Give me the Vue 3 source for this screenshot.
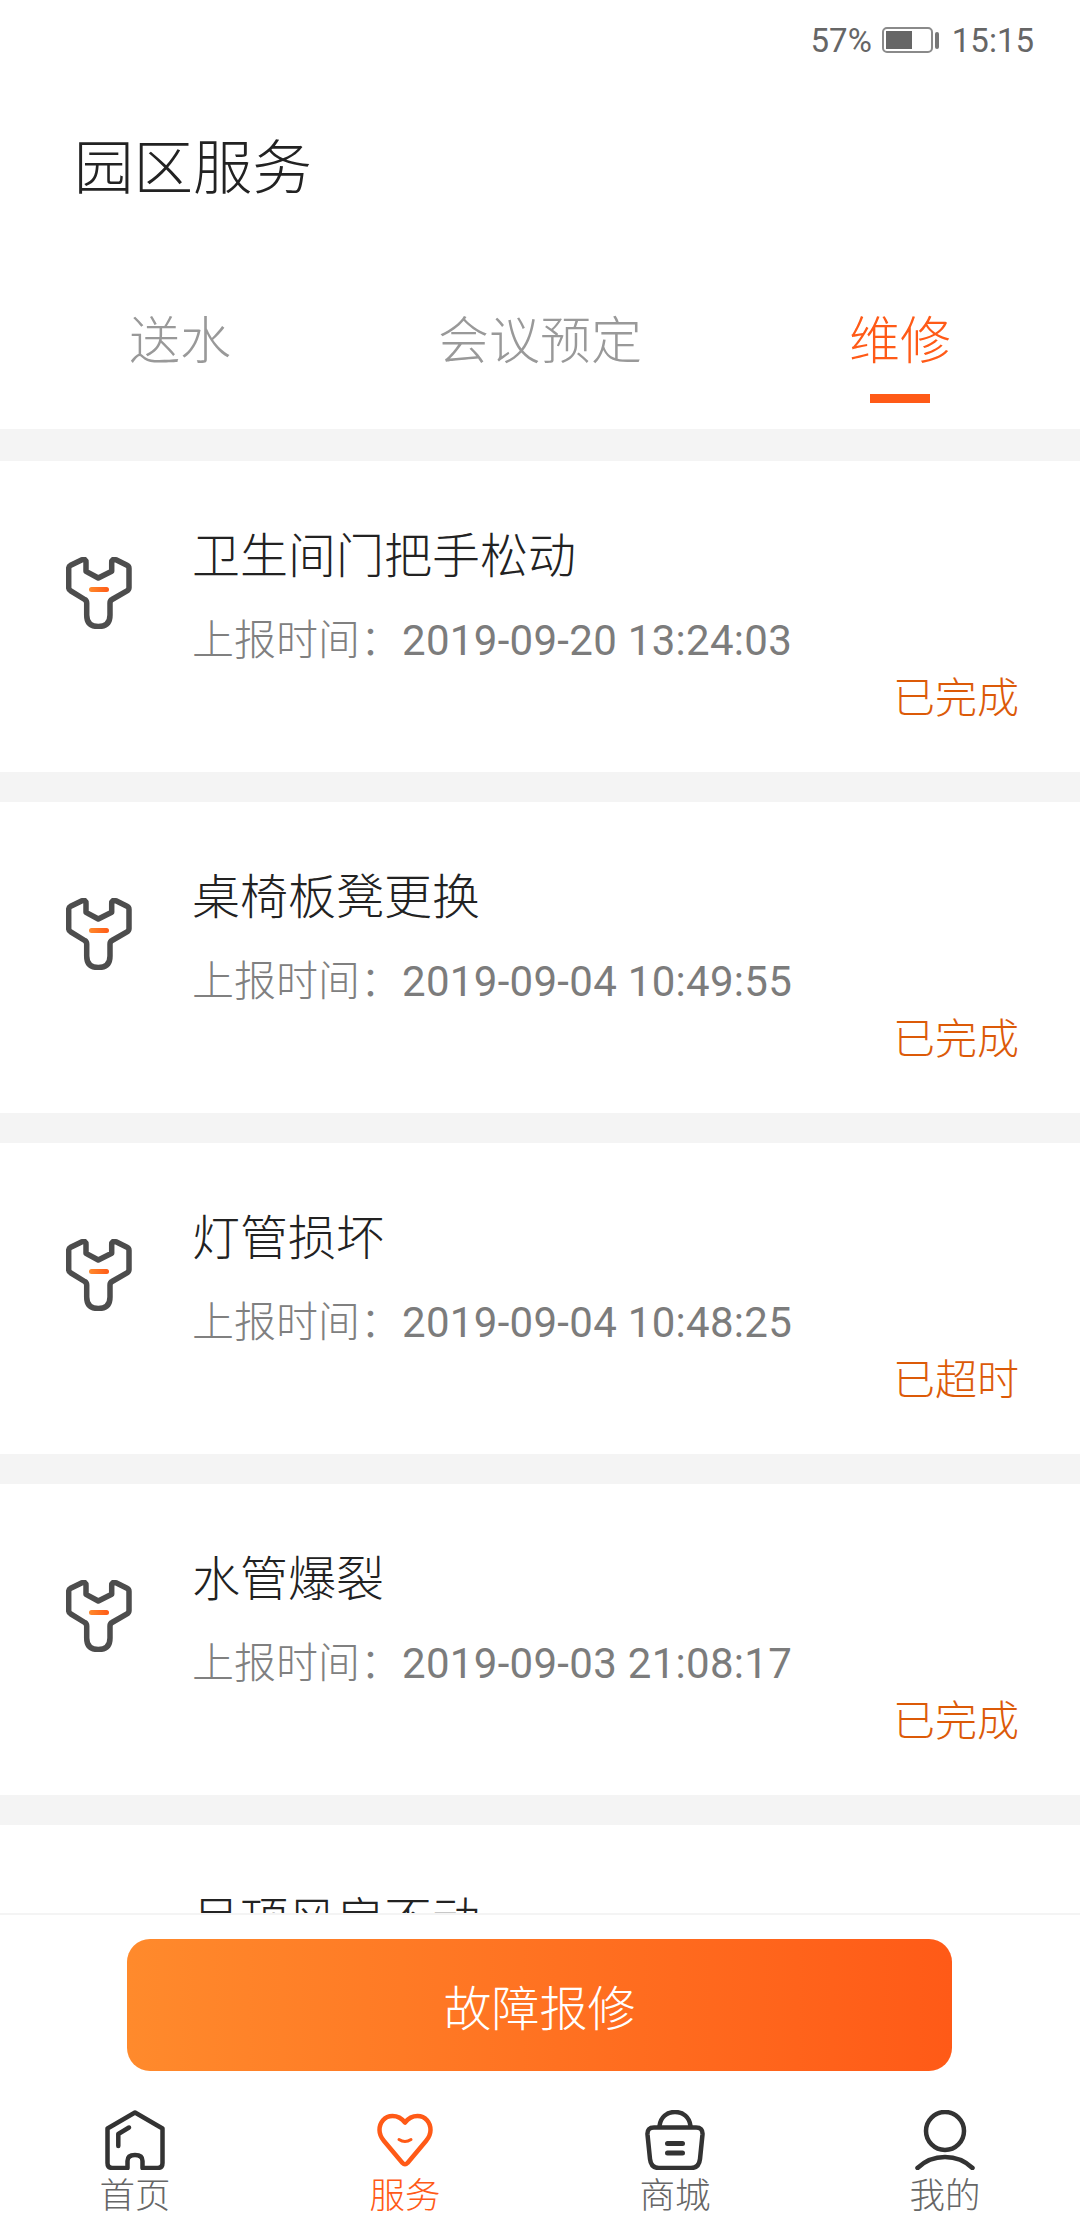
<script setup>
const tabs = [
  { label: '送水' },
  { label: '会议预定' },
  { label: '维修', active: true },
]
const items = [
  { title: '卫生间门把手松动', time: '2019-09-20 13:24:03', status: '已完成' },
  { title: '桌椅板凳更换', time: '2019-09-04 10:49:55', status: '已完成' },
  { title: '灯管损坏', time: '2019-09-04 10:48:25', status: '已超时' },
  { title: '水管爆裂', time: '2019-09-03 21:08:17', status: '已完成' },
  { title: '吊顶风扇不动', time: '2019-09-03 20:11:40', status: '已完成' },
]
</script>

<template>
  <div class="page">
    <div class="status-bar">
      <span>57%</span>
      <span class="battery"><span class="battery-fill"></span></span>
      <span class="battery-nub"></span>
      <span class="clock">15:15</span>
    </div>
    <h1 class="title">园区服务</h1>
    <nav class="tabs">
      <div v-for="tab in tabs" :key="tab.label" class="tab" :class="{ active: tab.active }">
        <span>{{ tab.label }}</span>
        <i class="tab-line"></i>
      </div>
    </nav>
    <main class="list">
      <article v-for="item in items" :key="item.time" class="card">
        <svg class="wrench" viewBox="0 0 66 72" width="66" height="72" fill="none">
          <defs>
            <linearGradient id="dash" x1="0" y1="0" x2="1" y2="0">
              <stop offset="0" stop-color="#ff8a2c" />
              <stop offset="1" stop-color="#ff5a17" />
            </linearGradient>
          </defs>
          <path
            d="M2.7 11.5Q2.7 9.3 4.7 8.3L16 2.8Q20 1.3 20 5.5V14.3L32.3 21L45.7 14.3V5.5Q45.7 1.3 50 2.8L61 8.3Q63 9.3 63 11.5V30.5Q63 32.7 61 33.8L46 42.5Q44 43.6 44 46V58Q44 69.5 32.3 69.5Q20.7 69.5 20.7 58V46Q20.7 43.6 18.7 42.5L4.7 33.8Q2.7 32.7 2.7 30.5Z"
            stroke="#4d4d4d" stroke-width="5.5" stroke-linejoin="round"
          />
          <rect x="23" y="30" width="20" height="5" rx="2.5" fill="url(#dash)" />
        </svg>
        <div class="card-body">
          <h2 class="card-title">{{ item.title }}</h2>
          <p class="card-time">上报时间：<span class="digits">{{ item.time }}</span></p>
          <p class="card-status">{{ item.status }}</p>
        </div>
      </article>
    </main>
    <footer class="footer">
      <button class="action">故障报修</button>
      <div class="nav">
        <div class="nav-item">
          <svg viewBox="0 0 60 60" width="60" height="60" fill="none" stroke="#333" stroke-width="4.5" stroke-linecap="round" stroke-linejoin="round">
            <path d="M30 2.5L2.5 18.5V53Q2.5 58 7.5 58H22.5V51Q22.5 45 30 45Q37.5 45 37.5 51V58H52.5Q57.5 58 57.5 53V18.5Z" />
            <path d="M13.3 36V24L24 17.5" />
          </svg>
          <span>首页</span>
        </div>
        <div class="nav-item active">
          <svg viewBox="0 0 60 60" width="60" height="60" fill="none" stroke="#ff5a17" stroke-width="4.5" stroke-linecap="round" stroke-linejoin="round">
            <path d="M30 12.5C26.5 8 22 6 17.5 6C9.5 6 4.5 12.5 4.5 20C4.5 24.5 6 27.5 9 31L27.5 53Q30 55.5 32.5 53L51 31C54 27.5 55.5 24.5 55.5 20C55.5 12.5 50.5 6 42.5 6C38 6 33.5 8 30 12.5Z" />
            <path d="M24 29.5Q30 33.5 36 29.5" stroke-width="3" />
          </svg>
          <span>服务</span>
        </div>
        <div class="nav-item">
          <svg viewBox="0 0 60 60" width="60" height="60" fill="none" stroke="#333" stroke-width="4.5" stroke-linecap="round" stroke-linejoin="round">
            <path d="M9 17.5H51Q58 17.5 57.5 24.5L55 49Q54 58 46 58H14Q6 58 5 49L2.5 24.5Q2 17.5 9 17.5Z" />
            <path d="M14.5 16C15.5 7 22 2 30 2C38 2 44.5 7 45.5 16" />
            <path d="M22.5 33.5H37.5M22.5 43H37.5" stroke-width="5" />
          </svg>
          <span>商城</span>
        </div>
        <div class="nav-item">
          <svg viewBox="0 0 60 60" width="60" height="60" fill="none" stroke="#333" stroke-width="4.5" stroke-linecap="round" stroke-linejoin="round">
            <circle cx="30" cy="21" r="19" />
            <path d="M2.5 58Q14 47 30 47Q46 47 57.5 58" />
          </svg>
          <span>我的</span>
        </div>
      </div>
    </footer>
  </div>
</template>

<style>
html, body { margin: 0; background: #fff; }
</style>

<style scoped>
.page {
  width: 1080px;
  height: 2240px;
  display: flex;
  flex-direction: column;
  overflow: hidden;
  background: #fff;
  font-family: Roboto, "Noto Sans CJK SC", sans-serif;
  font-weight: 300;
}
.status-bar {
  height: 80px;
  flex: none;
  display: flex;
  justify-content: flex-end;
  align-items: center;
  padding-right: 46px;
  box-sizing: border-box;
  font-size: 33px;
  font-weight: 400;
  color: #666;
}
.battery {
  width: 51px;
  height: 26px;
  margin-left: 10px;
  border: 2px solid #8a8a8a;
  border-radius: 5px;
  box-sizing: border-box;
  padding: 2px;
  display: flex;
}
.battery-fill { width: 26px; background: #666; }
.battery-nub {
  width: 4px;
  height: 17px;
  margin-left: 2px;
  border-radius: 2px;
  background: #777;
}
.clock { margin-left: 13px; }
.title {
  flex: none;
  margin: 49px 0 0 74px;
  height: 80px;
  line-height: 80px;
  font-size: 59.5px;
  font-weight: 300;
  color: #222;
}
.tabs {
  flex: none;
  height: 220px;
  display: grid;
  grid-template-columns: repeat(3, 1fr);
  box-sizing: border-box;
  padding-top: 98px;
}
.tab {
  display: flex;
  flex-direction: column;
  align-items: center;
  font-size: 51px;
  line-height: 70px;
  color: #999;
}
.tab-line { width: 60px; height: 9px; margin-top: 17px; }
.tab.active { color: #ff5a17; }
.tab.active .tab-line { background: #ff5a17; }
.list {
  flex: 1;
  min-height: 0;
  overflow: hidden;
  background: #f4f4f4;
  padding-top: 32px;
  display: flex;
  flex-direction: column;
  gap: 30px;
}
.card {
  flex: none;
  height: 311px;
  box-sizing: border-box;
  background: #fff;
  display: flex;
  padding: 66px 61px 0 66px;
}
.wrench { flex: none; margin-top: 30px; }
.card-body { flex: 1; margin-left: 60px; }
.card-title {
  margin: 0;
  font-size: 48px;
  line-height: 60px;
  font-weight: 300;
  color: #222;
}
.card-time {
  margin: 29px 0 0;
  font-size: 42px;
  line-height: 50px;
  color: #808080;
}
.digits { font-weight: 400; letter-spacing: 0.3px; color: #7c7c7c; }
.card-status {
  margin: 8px 0 0;
  font-size: 42px;
  line-height: 50px;
  font-weight: 300;
  color: #dc5a08;
  text-align: right;
}
.footer {
  flex: none;
  height: 327px;
  box-sizing: border-box;
  background: #fff;
  border-top: 2px solid #f4f4f4;
  padding-top: 24px;
}
.action {
  display: block;
  width: 825px;
  height: 132px;
  margin: 0 0 0 127px;
  border: 0;
  border-radius: 23px;
  background: linear-gradient(90deg, #ff8a2c, #ff5a17);
  color: #fff;
  font: inherit;
  font-size: 48px;
  font-weight: 300;
}
.nav {
  display: grid;
  grid-template-columns: repeat(4, 270px);
  margin-top: 39px;
}
.nav-item {
  display: flex;
  flex-direction: column;
  align-items: center;
  font-size: 35.5px;
  line-height: 52px;
  color: #666;
}
.nav-item.active { color: #ff5a17; }
.nav-item svg { display: block; }
</style>
